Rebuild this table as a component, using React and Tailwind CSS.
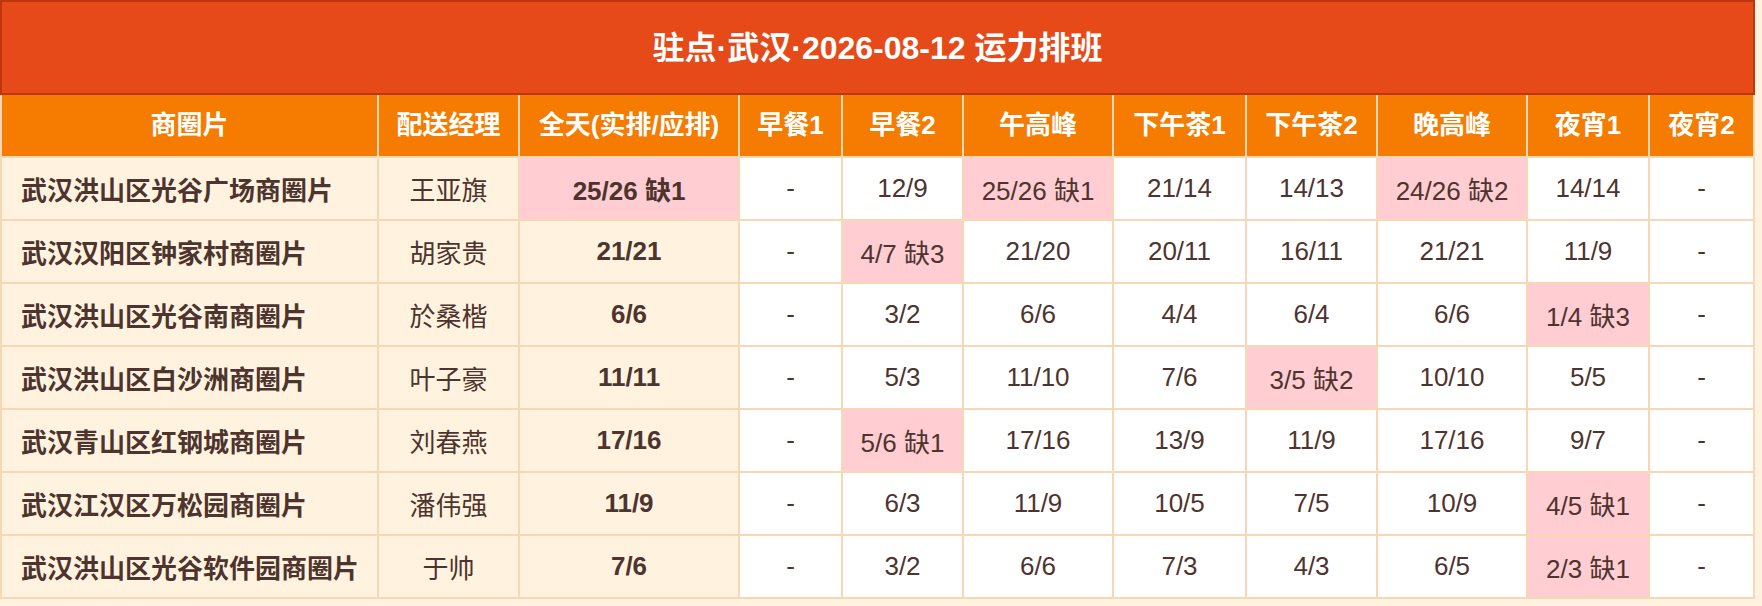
import React from 'react';

const cols = [377, 141, 220, 103, 121, 150, 133, 131, 150, 122, 105];

const headers = ['商圈片', '配送经理', '全天(实排/应排)', '早餐1', '早餐2', '午高峰', '下午茶1', '下午茶2', '晚高峰', '夜宵1', '夜宵2'];

const rows = [
	['武汉洪山区光谷广场商圈片', '王亚旗', '25/26 缺1', '-', '12/9', '25/26 缺1', '21/14', '14/13', '24/26 缺2', '14/14', '-'],
	['武汉汉阳区钟家村商圈片', '胡家贵', '21/21', '-', '4/7 缺3', '21/20', '20/11', '16/11', '21/21', '11/9', '-'],
	['武汉洪山区光谷南商圈片', '於桑楷', '6/6', '-', '3/2', '6/6', '4/4', '6/4', '6/6', '1/4 缺3', '-'],
	['武汉洪山区白沙洲商圈片', '叶子豪', '11/11', '-', '5/3', '11/10', '7/6', '3/5 缺2', '10/10', '5/5', '-'],
	['武汉青山区红钢城商圈片', '刘春燕', '17/16', '-', '5/6 缺1', '17/16', '13/9', '11/9', '17/16', '9/7', '-'],
	['武汉江汉区万松园商圈片', '潘伟强', '11/9', '-', '6/3', '11/9', '10/5', '7/5', '10/9', '4/5 缺1', '-'],
	['武汉洪山区光谷软件园商圈片', '于帅', '7/6', '-', '3/2', '6/6', '7/3', '4/3', '6/5', '2/3 缺1', '-'],
];

// 缺 = short on riders, gets the pink fill
const cellClass = (value, i) => {
	const short = value.includes('缺');
	if (i === 0) return 'bg-[#fff3e0] font-bold text-left pl-[19px]';
	if (i === 1) return 'bg-[#fff3e0] text-center';
	if (i === 2) return short ? 'bg-[#ffcdd2] font-bold text-center' : 'bg-[#fff3e0] font-bold text-center';
	return short ? 'bg-[#ffcdd2] text-center' : 'bg-white text-center';
};

const App = () => {
	return (
		<main className="min-h-screen w-full bg-[#fff3e0] font-['Liberation_Sans','Noto_Sans_CJK_SC',sans-serif] text-[#4e342e]">
			<table className="w-[1753px] table-fixed border-collapse border-2 border-[#f6d8b6]">
				<colgroup>
					{cols.map((w, i) => (
						<col key={i} style={{ width: w }} />
					))}
				</colgroup>
				<thead>
					<tr className="h-[93px]">
						<th colSpan={11} className="border-2 border-[#bf360c] bg-[#e64a19] text-center text-[32px] font-bold text-white">
							驻点·武汉·2026-08-12 运力排班
						</th>
					</tr>
					<tr className="h-[63px]">
						{headers.map((h) => (
							<th key={h} className="border-2 border-t-0 border-[#f6d8b6] bg-[#f57c00] text-center text-[26px] font-bold text-white">
								{h}
							</th>
						))}
					</tr>
				</thead>
				<tbody>
					{rows.map((row) => (
						<tr key={row[0]} className="h-[63px]">
							{row.map((v, i) => (
								<td key={i} className={`border-2 border-[#f6d8b6] text-[26px] leading-[normal] ${cellClass(v, i)}`}>
									{v}
								</td>
							))}
						</tr>
					))}
				</tbody>
			</table>
		</main>
	);
};

export default App;
